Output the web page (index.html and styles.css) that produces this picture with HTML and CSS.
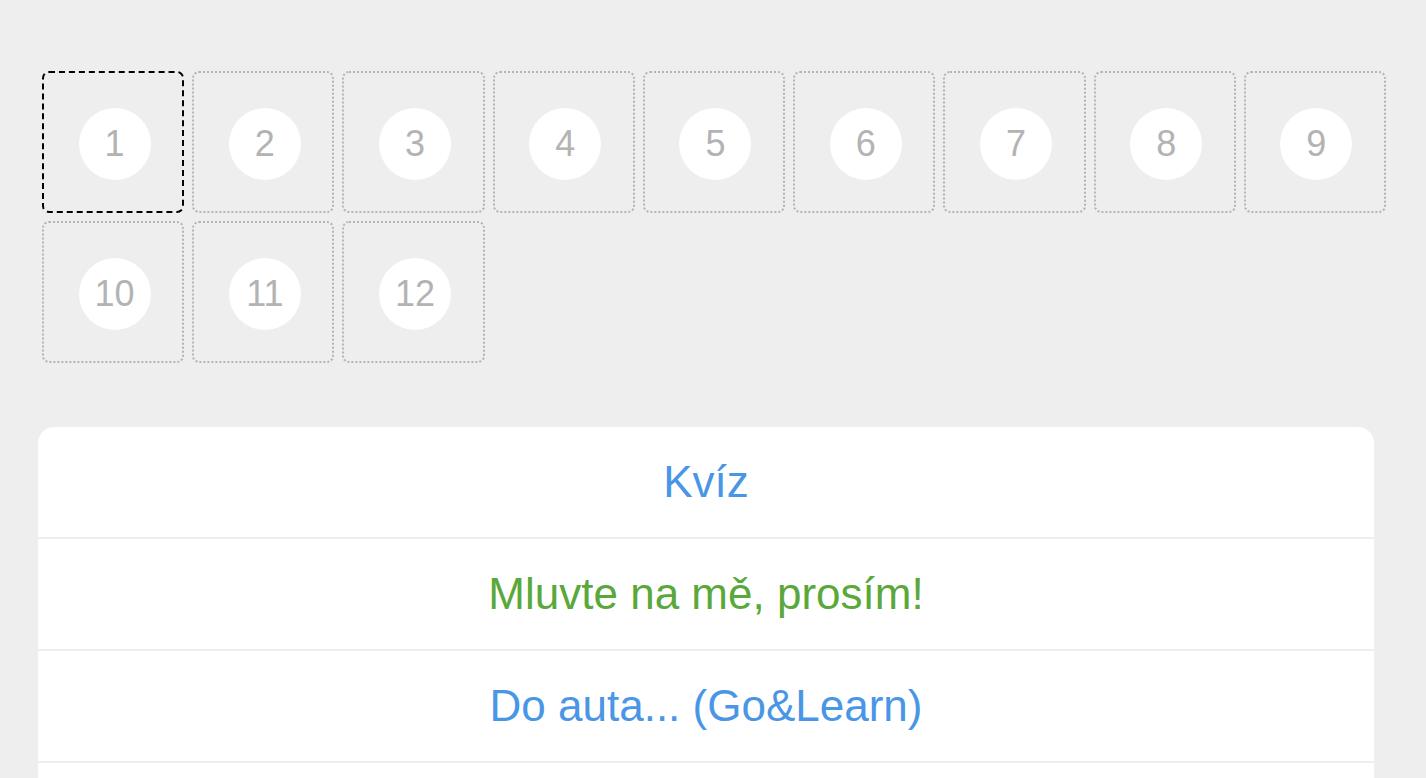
FILE: index.html
```html
<!DOCTYPE html>
<html lang="cs">
<head>
<meta charset="utf-8">
<title>Lekce</title>
<link rel="stylesheet" href="styles.css">
</head>
<body>
<div class="page">
  <div class="grid">
    <div class="cell"><div class="tile active"><span class="num">1</span></div></div>
    <div class="cell"><div class="tile"><span class="num">2</span></div></div>
    <div class="cell"><div class="tile"><span class="num">3</span></div></div>
    <div class="cell"><div class="tile"><span class="num">4</span></div></div>
    <div class="cell"><div class="tile"><span class="num">5</span></div></div>
    <div class="cell"><div class="tile"><span class="num">6</span></div></div>
    <div class="cell"><div class="tile"><span class="num">7</span></div></div>
    <div class="cell"><div class="tile"><span class="num">8</span></div></div>
    <div class="cell"><div class="tile"><span class="num">9</span></div></div>
    <div class="cell"><div class="tile"><span class="num">10</span></div></div>
    <div class="cell"><div class="tile"><span class="num">11</span></div></div>
    <div class="cell"><div class="tile"><span class="num">12</span></div></div>
  </div>
  <div class="menu">
    <div class="item blue">Kvíz</div>
    <div class="item green">Mluvte na mě, prosím!</div>
    <div class="item blue">Do auta... (Go&amp;Learn)</div>
    <div class="item blue">&nbsp;</div>
  </div>
</div>
</body>
</html>
```
FILE: styles.css
```css
html, body {
  margin: 0;
  padding: 0;
  background: #eeeeee;
  font-family: "Liberation Sans", Arial, sans-serif;
  overflow: hidden;
}
.page {
  padding: 67px 36px 0 38px;
}
.grid {
  display: grid;
  grid-template-columns: repeat(9, 1fr);
}
.cell {
  padding: 4px;
}
.tile {
  height: 142px;
  box-sizing: border-box;
  border: 2px dotted #b4b4b4;
  border-radius: 7px;
  display: flex;
  align-items: center;
  justify-content: center;
  padding: 3px 0 0 3px;
}
.tile.active {
  border: 2px dashed #000000;
}
.num {
  width: 72px;
  height: 72px;
  border-radius: 50%;
  background: #ffffff;
  color: #b3b3b3;
  font-size: 36px;
  display: flex;
  align-items: center;
  justify-content: center;
}
.menu {
  margin-top: 60px;
  margin-right: 16px;
  background: #ffffff;
  border-radius: 16px 16px 0 0;
}
.item {
  height: 110px;
  border-bottom: 2px solid #eeeeee;
  display: flex;
  align-items: center;
  justify-content: center;
  font-size: 44px;
}
.blue { color: #4a96e6; }
.green { color: #5aa83a; }
```
